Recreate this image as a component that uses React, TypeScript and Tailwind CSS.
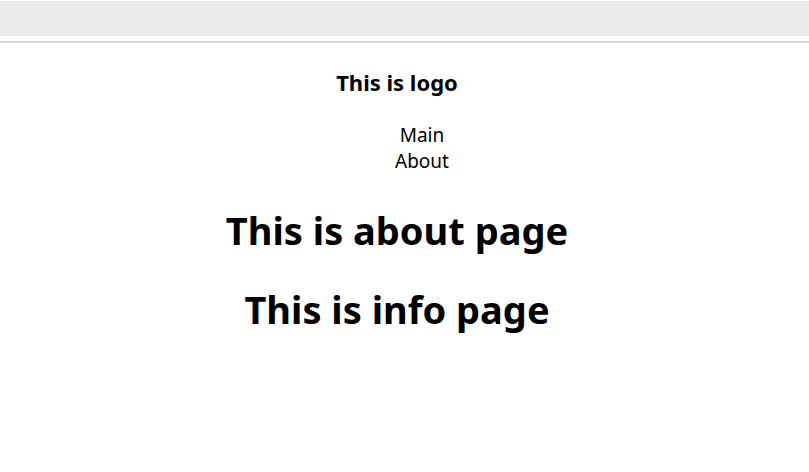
import React from "react"

const App = () => {
  return (
    <div className="min-h-[472px] bg-white text-black" style={{ fontFamily: '"Noto Sans", "Open Sans", sans-serif' }}>
      <div className="mt-px h-[35px] bg-[#e9eaec]" />
      <div className="mt-[5px] h-[2px] bg-[#d6d6d9]" />
      <div className="w-[794px]">
        <header className="flex flex-col items-center">
          <div className="mt-[24px] text-[22px] font-bold leading-[30px]">This is logo</div>
          <ul className="mt-[25px] pl-[50px] text-center text-[19px] leading-[26px]">
            <li>Main</li>
            <li>About</li>
          </ul>
        </header>
        <main className="flex flex-col items-center">
          <h1 className="mt-[30px] text-[38px] font-bold leading-[52px]">This is about page</h1>
          <h1 className="mt-[27px] text-[38px] font-bold leading-[52px]">This is info page</h1>
        </main>
      </div>
    </div>
  )
}

export default App
